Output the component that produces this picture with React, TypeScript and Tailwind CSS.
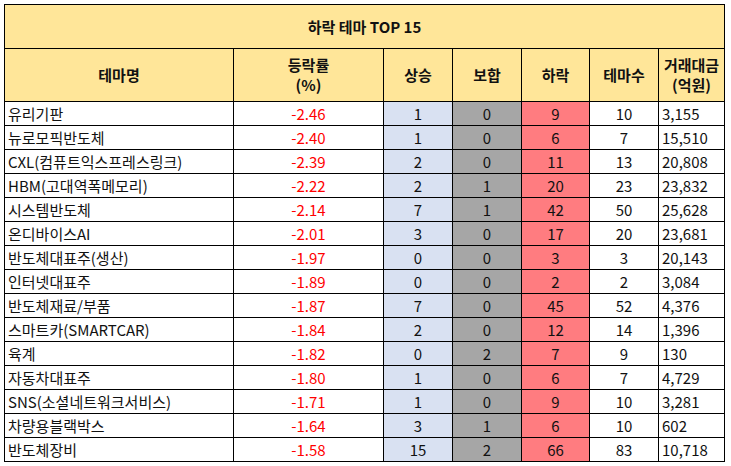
import React from "react";

type Row = {
  name: string;
  rate: string;
  up: number;
  flat: number;
  down: number;
  total: number;
  amount: string;
};

const rows: Row[] = [
  { name: "유리기판", rate: "-2.46", up: 1, flat: 0, down: 9, total: 10, amount: "3,155" },
  { name: "뉴로모픽반도체", rate: "-2.40", up: 1, flat: 0, down: 6, total: 7, amount: "15,510" },
  { name: "CXL(컴퓨트익스프레스링크)", rate: "-2.39", up: 2, flat: 0, down: 11, total: 13, amount: "20,808" },
  { name: "HBM(고대역폭메모리)", rate: "-2.22", up: 2, flat: 1, down: 20, total: 23, amount: "23,832" },
  { name: "시스템반도체", rate: "-2.14", up: 7, flat: 1, down: 42, total: 50, amount: "25,628" },
  { name: "온디바이스AI", rate: "-2.01", up: 3, flat: 0, down: 17, total: 20, amount: "23,681" },
  { name: "반도체대표주(생산)", rate: "-1.97", up: 0, flat: 0, down: 3, total: 3, amount: "20,143" },
  { name: "인터넷대표주", rate: "-1.89", up: 0, flat: 0, down: 2, total: 2, amount: "3,084" },
  { name: "반도체재료/부품", rate: "-1.87", up: 7, flat: 0, down: 45, total: 52, amount: "4,376" },
  { name: "스마트카(SMARTCAR)", rate: "-1.84", up: 2, flat: 0, down: 12, total: 14, amount: "1,396" },
  { name: "육계", rate: "-1.82", up: 0, flat: 2, down: 7, total: 9, amount: "130" },
  { name: "자동차대표주", rate: "-1.80", up: 1, flat: 0, down: 6, total: 7, amount: "4,729" },
  { name: "SNS(소셜네트워크서비스)", rate: "-1.71", up: 1, flat: 0, down: 9, total: 10, amount: "3,281" },
  { name: "차량용블랙박스", rate: "-1.64", up: 3, flat: 1, down: 6, total: 10, amount: "602" },
  { name: "반도체장비", rate: "-1.58", up: 15, flat: 2, down: 66, total: 83, amount: "10,718" },
];

const cell = "border border-black h-[24px] p-0 leading-none";
const head = "border border-black p-0 text-center font-bold leading-[20px]";

export default function App() {
  return (
    <div
      className="bg-white w-[731px] h-[466px] pl-[4px] pt-[4px] text-[15px] text-[#111]"
      style={{ fontFamily: '"Noto Sans CJK KR", "Noto Sans", sans-serif' }}
    >
      <table className="table-fixed border-collapse w-[720px]">
        <colgroup>
          <col className="w-[229px]" />
          <col className="w-[150px]" />
          <col className="w-[69px]" />
          <col className="w-[69px]" />
          <col className="w-[68px]" />
          <col className="w-[69px]" />
          <col className="w-[66px]" />
        </colgroup>
        <thead>
          <tr>
            <th colSpan={7} className={`${head} h-[44px] bg-[#ffe699]`}>
              하락 테마 TOP 15
            </th>
          </tr>
          <tr className="bg-[#ffe699]">
            <th className={`${head} h-[53px]`}>테마명</th>
            <th className={head}>
              등락률
              <br />
              (%)
            </th>
            <th className={head}>상승</th>
            <th className={head}>보합</th>
            <th className={head}>하락</th>
            <th className={head}>테마수</th>
            <th className={head}>
              거래대금
              <br />
              (억원)
            </th>
          </tr>
        </thead>
        <tbody>
          {rows.map((r) => (
            <tr key={r.name}>
              <td className={`${cell} pl-[3px] whitespace-nowrap`}>{r.name}</td>
              <td className={`${cell} text-center text-[#ff0000]`}>{r.rate}</td>
              <td className={`${cell} text-center bg-[#d9e1f2]`}>{r.up}</td>
              <td className={`${cell} text-center bg-[#a6a6a6]`}>{r.flat}</td>
              <td className={`${cell} text-center bg-[#ff7c80]`}>{r.down}</td>
              <td className={`${cell} text-center`}>{r.total}</td>
              <td className={`${cell} pl-[3px]`}>{r.amount}</td>
            </tr>
          ))}
        </tbody>
      </table>
    </div>
  );
}
